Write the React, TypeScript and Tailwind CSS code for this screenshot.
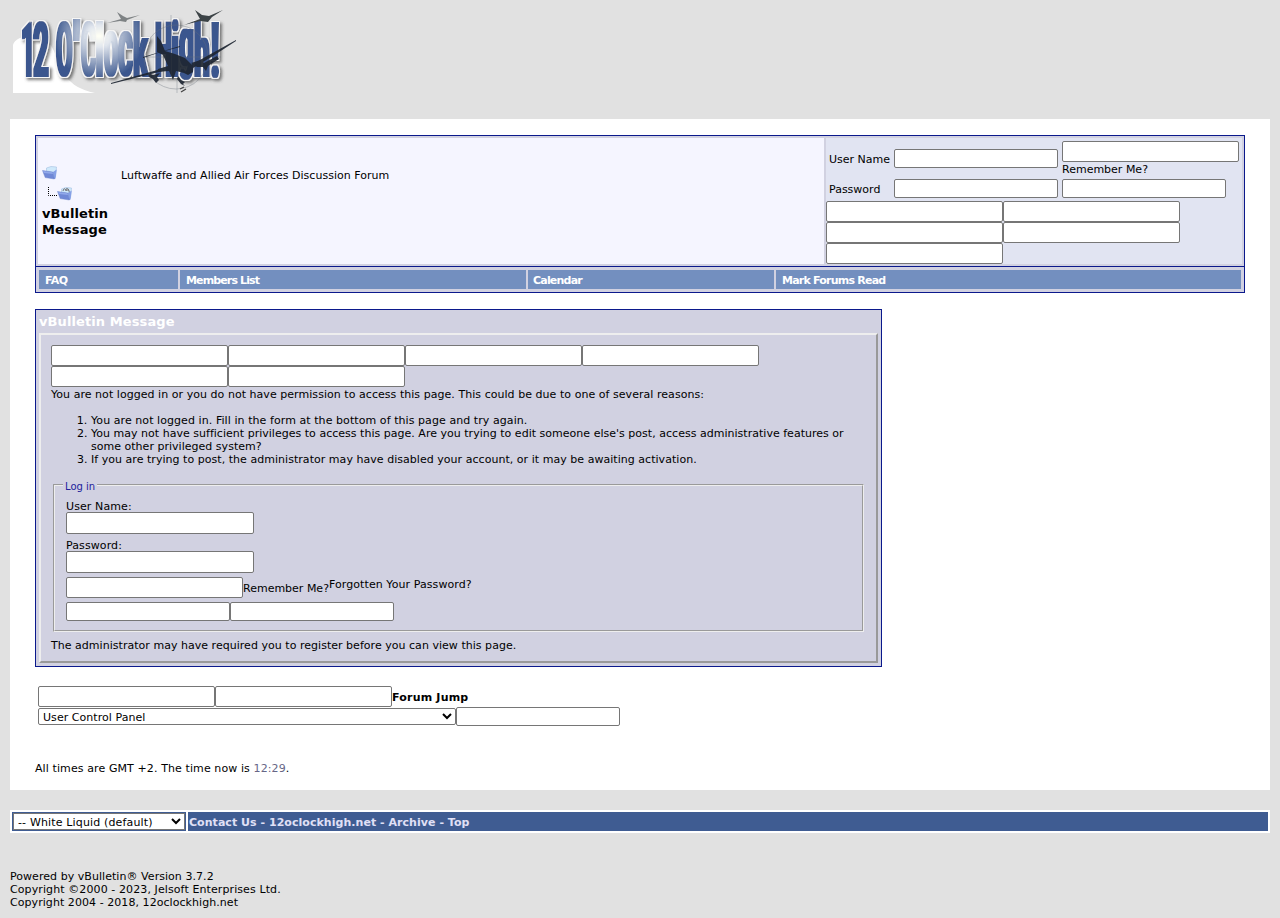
import React from "react";

const fieldBase = "block shrink-0 rounded-[2px] border border-[#767676] bg-white px-1 outline-none";

function Field({ size = "lg" }: { size?: "lg" | "sm" | "xl" }) {
  const dims = size === "lg" ? "w-[177px] h-[21px]" : size === "sm" ? "w-[164px] h-[19px]" : "w-[188px] h-[22px]";
  return <input className={`${fieldBase} ${dims}`} />;
}

// glyph, left edge, advance width, font size, baseline
const glyphs: [string, number, number, number, number][] = [
  ["1", 8, 14, 77, 67.5],
  ["2", 20, 16, 77, 67.5],
  ["O", 43, 16.5, 76, 67],
  ["'", 60, 7, 77, 67.5],
  ["C", 68, 15, 76, 67],
  ["l", 82.5, 8, 75, 67.5],
  ["o", 91, 14, 83, 67],
  ["c", 105, 15, 83, 67],
  ["k", 120, 15, 75, 67.5],
  ["H", 142, 17, 77, 67.5],
  ["i", 158.5, 7.5, 77, 67.5],
  ["g", 166, 15, 70, 57],
  ["h", 181, 16, 75, 67.5],
  ["!", 197.5, 9, 77, 67.5],
];

function Logo() {
  return (
    <svg width="226" height="86" viewBox="0 0 226 86" className="block overflow-visible">
      <defs>
        <radialGradient id="shine" gradientUnits="userSpaceOnUse" cx="86" cy="27" r="44">
          <stop offset="0" stopColor="#fffff4" />
          <stop offset="0.25" stopColor="#e2e7ee" />
          <stop offset="1" stopColor="#3b578e" />
        </radialGradient>
        <filter id="bevel" filterUnits="userSpaceOnUse" x="-5" y="-5" width="236" height="100">
          <feMorphology in="SourceGraphic" operator="dilate" radius="1 0.01" result="bold" />
          <feMorphology in="bold" operator="dilate" radius="1" result="edge" />
          <feFlood floodColor="#f6f6f6" />
          <feComposite in2="edge" operator="in" result="outline" />
          <feGaussianBlur in="edge" stdDeviation="1.6" />
          <feOffset dx="1.5" dy="2" result="blur" />
          <feFlood floodColor="#444" floodOpacity="0.7" />
          <feComposite in2="blur" operator="in" result="shadow" />
          <feMerge>
            <feMergeNode in="shadow" />
            <feMergeNode in="outline" />
            <feMergeNode in="bold" />
          </feMerge>
        </filter>
      </defs>
      <path d="M0 84V36C3 24 33 22 41 42C49 62 53 78 82 84Z" fill="#fff" />
      <text filter="url(#bevel)" fontFamily="Roboto, 'Liberation Sans', sans-serif" fontWeight={900} fill="url(#shine)">
        {glyphs.map(([ch, x, w, size, y], i) => (
          <tspan key={i} x={x} y={y} fontSize={size} textLength={w} lengthAdjust="spacingAndGlyphs">{ch}</tspan>
        ))}
      </text>
      <g stroke="#666e78" strokeWidth="0.6" fill="none" opacity="0.6">
        <circle cx="163" cy="48" r="32" />
        <path d="M158 6V22M164 70V84M132 48H208" />
      </g>
      <g fill="#1e2632" opacity="0.92">
        <path d="M144 27L148 32L152 42L162 45L172 49L180 57L180 63L175 66L171 64L163 62L160 71L156 62L144 63L145 60L155 57L150 46L144 43Z" />
        <path d="M98 74L148 60L150 62L98 75Z" />
        <path d="M176 57L223 31L223 32L200 47L180 59Z" />
        <path d="M130 48L167 37L167 38L148 43L130 49Z" />
        <path d="M178 54L188 51L191 54L204 47L206 50L195 57L193 62L190 58L184 58Z" />
        <path d="M135 64L140 66L147 64L144 68L146 71L143 74L140 70L136 68Z" />
        <path d="M165 67L168 71L172 73L170 75L172 77L168 75L164 70Z" />
      </g>
      <g fill="#3c4346">
        <path d="M182 1L189 6L196 7L210 1L199 8L195 13L187 12L171 16L187 10Z" />
        <path d="M104 3L110 7L114 9L127 6L114 11L113 13L107 12L94 14L108 10Z" opacity="0.6" />
      </g>
      <path d="M167 80l4 -2m-3 5l5 -3" stroke="#444" strokeWidth="1.3" />
    </svg>
  );
}

function Folder({ open = false }: { open?: boolean }) {
  return (
    <svg width="16" height="16" viewBox="0 0 16 16" className="block shrink-0">
      <path d="M4.5 3L9 1.5L14.5 2L13.5 12L4.5 8Z" fill="#cfe9fb" stroke="#a3bfe0" strokeWidth="0.6" />
      {open && <path d="M6 5Q7 0.5 9.5 5M9 3Q12 1 12.5 8M8 4h4" fill="none" stroke="#736f70" strokeWidth="1" />}
      <path d="M11 7L14.7 4.5L13.6 13.5L12 14Z" fill="#86a0e6" />
      <path d="M0.5 5.5L10.8 7L12.4 14L3.2 12.6Z" fill="#7088d6" stroke="#6079c6" strokeWidth="0.4" />
      <path d="M1 6L10.5 7.3L11 9L2 8Z" fill="#91a8ea" />
    </svg>
  );
}

export default function App() {
  return (
    <div className="flex h-[918px] w-[1280px] flex-col overflow-hidden bg-[#e1e1e1] px-[10px] font-['DejaVu_Sans',sans-serif] text-[11px] leading-[13px] text-black">
      <header className="h-[119px] shrink-0 pl-[3px] pt-[9px]">
        <Logo />
      </header>

      <main className="h-[671px] shrink-0 bg-white px-[25px] pt-4">
        <section className="h-[158px] border border-[#0b198c] bg-[#d1d1e1]">
          <div className="flex h-[130px] gap-[2px] p-[2px]">
            <div className="flex w-[786px] bg-[#f5f5ff] pl-1">
              <div className="w-[79px] pt-[27px]">
                <Folder />
                <div className="mt-[5px] flex h-[16px] pl-[6px]">
                  <svg width="9" height="16" className="block shrink-0">
                    <path d="M0.5 1V9.5H9" fill="none" stroke="#000" strokeDasharray="1 1" />
                  </svg>
                  <Folder open />
                </div>
                <h1 className="mt-1 text-[13px] font-bold leading-4 tracking-[0.1px]">vBulletin Message</h1>
              </div>
              <p className="pt-[31px] tracking-[0.02px]">Luftwaffe and Allied Air Forces Discussion Forum</p>
            </div>
            <form className="w-[416px] bg-[#e1e4f2]">
              <div className="flex h-[38px] items-center pl-[3px]">
                <label className="w-[65px] pt-[4px]">User Name</label>
                <div className="pt-[3px]"><Field size="sm" /></div>
                <div className="pl-1 pt-[3px]">
                  <Field />
                  <span className="mt-px block">Remember Me?</span>
                </div>
              </div>
              <div className="flex h-[25px] items-end gap-1 pb-[3px] pl-[3px]">
                <label className="w-[61px] pb-[2px]">Password</label>
                <Field size="sm" />
                <Field size="sm" />
              </div>
              <div className="flex w-[360px] flex-wrap">
                <Field /><Field /><Field /><Field /><Field />
              </div>
            </form>
          </div>
          <nav className="flex h-[26px] gap-[2px] border-t border-[#0b198c] p-[3px] font-bold leading-[21px] text-white">
            <a className="h-[19px] w-[139px] bg-[#738fbf] pl-[6px] tracking-[-0.45px]">FAQ</a>
            <a className="h-[19px] w-[346px] bg-[#738fbf] pl-[6px] tracking-[-0.87px]">Members List</a>
            <a className="h-[19px] w-[246px] bg-[#738fbf] pl-[5px] tracking-[-0.8px]">Calendar</a>
            <a className="h-[19px] w-[465px] bg-[#738fbf] pl-[6px] tracking-[-0.78px]">Mark Forums Read</a>
          </nav>
        </section>

        <section className="mt-4 h-[358px] w-[847px] border border-[#0b198c] bg-[#d1d1e1] px-[3px]">
          <h2 className="h-[23px] pt-[4px] text-[13px] font-bold leading-4 tracking-[0.1px] text-white">vBulletin Message</h2>
          <div className="h-[330px] border-2 border-b-[#999] border-l-[#eee] border-r-[#999] border-t-[#eee] px-[10px] pt-[10px]">
            <div className="flex w-[720px] flex-wrap">
              <Field /><Field /><Field /><Field /><Field /><Field />
            </div>
            <p className="pt-px tracking-[0.045px]">You are not logged in or you do not have permission to access this page. This could be due to one of several reasons:</p>
            <ol className="mt-[13px] list-decimal pl-10">
              <li className="tracking-[0.07px]">You are not logged in. Fill in the form at the bottom of this page and try again.</li>
              <li className="tracking-[0.02px]">You may not have sufficient privileges to access this page. Are you trying to edit someone else's post, access administrative features or<br />some other privileged system?</li>
              <li className="tracking-[0.037px]">If you are trying to post, the administrator may have disabled your account, or it may be awaiting activation.</li>
            </ol>
            <fieldset className="ml-[2px] mt-[14px] h-[152px] w-[811px] border-2 border-[#eee] px-[11px] [border-style:groove]">
              <legend className="ml-[-3px] h-[10px] px-[2px] text-[10px] leading-[13px] text-[#22229c]">Log in</legend>
              <label className="mt-[10px] block h-3 tracking-[0.1px]">User Name:</label>
              <Field size="xl" />
              <label className="mt-[5px] block h-3 tracking-[0.1px]">Password:</label>
              <Field size="xl" />
              <div className="mt-1 flex">
                <Field />
                <span className="pt-[5px]">Remember Me?</span>
                <span className="pt-px tracking-[0.08px]">Forgotten Your Password?</span>
              </div>
              <div className="mt-1 flex"><Field size="sm" /><Field size="sm" /></div>
            </fieldset>
            <p className="mt-[7px] tracking-[0.03px]">The administrator may have required you to register before you can view this page.</p>
          </div>
        </section>

        <form className="mt-[19px] pl-[3px]">
          <div className="flex">
            <Field /><Field />
            <strong className="pt-[5px] font-bold tracking-[0.2px]">Forum Jump</strong>
          </div>
          <div className="flex items-center">
            <select className="h-[17px] w-[418px] appearance-auto rounded-[2px] border border-[#767676] bg-white p-0 pt-px text-[11px] leading-[13px] tracking-[0.05px]">
              <option>User Control Panel</option>
            </select>
            <Field size="sm" />
          </div>
        </form>
        <p className="mt-[36px] tracking-[0.1px]">All times are GMT +2. The time now is <span className="text-[#666686]">12:29</span>.</p>
      </main>

      <div className="mt-5 flex h-[23px] shrink-0 gap-[2px] bg-white p-[2px]">
        <div className="w-[174px] bg-[#3f5c92] p-px">
          <select className="block h-[17px] w-[172px] appearance-auto border border-[#767676] bg-white p-0 pt-px text-[11px] leading-[13px] tracking-[0.15px]">
            <option>-- White Liquid (default)</option>
          </select>
        </div>
        <div className="w-[1080px] bg-[#3f5c92] pl-px font-bold leading-[21px] tracking-[0.04px] text-[#e0e0f6]">Contact Us - 12oclockhigh.net - Archive - Top</div>
      </div>

      <footer className="mt-[37px]">
        <span className="tracking-[0.05px]">Powered by vBulletin® Version 3.7.2</span><br />
        <span className="tracking-[0.1px]">Copyright ©2000 - 2023, Jelsoft Enterprises Ltd.</span><br />
        <span className="tracking-[0.06px]">Copyright 2004 - 2018, 12oclockhigh.net</span>
      </footer>
    </div>
  );
}
